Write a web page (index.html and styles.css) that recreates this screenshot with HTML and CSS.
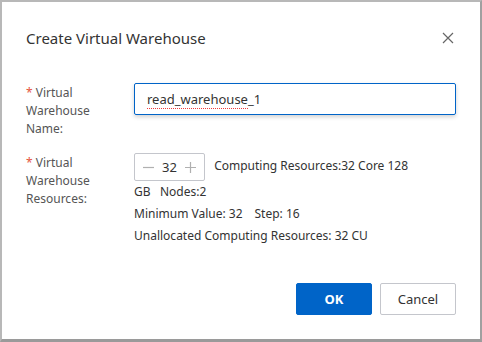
FILE: index.html
```html
<!DOCTYPE html>
<html lang="en">
<head>
    <meta charset="UTF-8">
    <meta name="viewport" content="width=device-width, initial-scale=1.0">
    <title>Create Virtual Warehouse</title>
    <link rel="stylesheet" href="styles.css">
</head>
<body>
    <div class="dialog">
        <div class="dialog-header">
            <div class="dialog-title">Create Virtual Warehouse</div>
            <button class="close-btn" type="button" aria-label="Close">
                <svg width="12" height="12" viewBox="0 0 12 12">
                    <path d="M1 1 L11 11 M11 1 L1 11" stroke="#666" stroke-width="1.2" fill="none"/>
                </svg>
            </button>
        </div>

        <div class="dialog-body">
            <div class="form-row">
                <label class="form-label"><span class="required">*</span> Virtual Warehouse Name:</label>
                <div class="form-control">
                    <div class="text-input"><span class="misspelled">read_warehouse</span>_1</div>
                </div>
            </div>

            <div class="form-row">
                <label class="form-label"><span class="required">*</span> Virtual Warehouse Resources:</label>
                <div class="form-control">
                    <div class="resource-line">
                        <span class="number-picker">
                            <svg class="step-btn" width="11" height="11" viewBox="0 0 11 11">
                                <path d="M0 5.5 H11" stroke="#b0b0b0" stroke-width="1.2"/>
                            </svg>
                            <span class="number-value">32</span>
                            <svg class="step-btn" width="11" height="11" viewBox="0 0 11 11">
                                <path d="M0 5.5 H11 M5.5 0 V11" stroke="#b0b0b0" stroke-width="1.2"/>
                            </svg>
                        </span>
                        <span class="resource-info">Computing Resources:32 Core 128 GB&nbsp;&nbsp; Nodes:2</span>
                    </div>
                    <div class="hint">Minimum Value: 32<span class="hint-gap"></span>Step: 16</div>
                    <div class="hint">Unallocated Computing Resources: 32 CU</div>
                </div>
            </div>
        </div>

        <div class="dialog-footer">
            <button class="btn btn-primary" type="button">OK</button>
            <button class="btn btn-default" type="button">Cancel</button>
        </div>
    </div>
</body>
</html>
```

FILE: styles.css
```css
html, body {
    margin: 0;
    padding: 0;
    height: 100%;
}
body {
    font-family: "Noto Sans", "Open Sans", sans-serif;
    color: #333;
    background: #fff;
}
.dialog {
    box-sizing: border-box;
    width: 482px;
    height: 342px;
    display: flex;
    flex-direction: column;
    background: #fff;
    border-top: 2px solid #b8b8b8;
    border-left: 2px solid #b8b8b8;
    border-right: 2px solid #a0a0a0;
    border-bottom: 3px solid #9a9a9a;
}
.dialog-header {
    display: flex;
    justify-content: space-between;
    align-items: center;
    padding: 24px 24px 0 24px;
    height: 24px;
}
.dialog-title {
    font-size: 15px;
    line-height: 24px;
    color: #333;
}
.close-btn {
    border: none;
    background: none;
    padding: 0;
    margin-right: 2px;
    width: 12px;
    height: 12px;
    display: flex;
    cursor: pointer;
}
.dialog-body {
    padding: 33px 24px 0 24px;
}
.form-row {
    display: flex;
    margin-bottom: 15px;
}
.form-label {
    width: 92px;
    flex-shrink: 0;
    margin-right: 16px;
    font-size: 12px;
    line-height: 18px;
    padding-top: 1px;
    color: #555;
}
.required {
    color: #e5533d;
}
.form-control {
    flex: 1;
    font-size: 12px;
    color: #333;
}
.text-input {
    box-sizing: border-box;
    height: 32px;
    border: 1px solid #0064c8;
    border-radius: 2px;
    padding: 0 12px;
    font-size: 13px;
    line-height: 30px;
    color: #333;
    box-shadow: 0 2px 4px rgba(0, 0, 0, 0.18);
}
.misspelled {
    border-bottom: 1px dotted #f03c3c;
}
.resource-line {
    max-width: 282px;
    line-height: 22px;
}
.number-picker {
    box-sizing: border-box;
    display: inline-flex;
    align-items: center;
    justify-content: space-between;
    width: 71px;
    height: 28px;
    border: 1px solid #c4c6cc;
    border-radius: 2px;
    padding: 0 8px 0 8px;
    vertical-align: middle;
    margin-right: 6px;
}
.step-btn {
    display: block;
}
.number-value {
    font-size: 13px;
    line-height: 18px;
    color: #333;
}
.hint {
    line-height: 22px;
}
.hint-gap {
    display: inline-block;
    width: 12px;
}
.dialog-footer {
    margin-top: auto;
    display: flex;
    justify-content: flex-end;
    gap: 8px;
    padding: 0 24px 24px 24px;
}
.btn {
    box-sizing: border-box;
    height: 32px;
    min-width: 76px;
    padding: 0 16px;
    border-radius: 2px;
    font-family: inherit;
    font-size: 13px;
    cursor: pointer;
}
.btn-primary {
    background: #0064c8;
    border: 1px solid #0064c8;
    color: #fff;
    font-weight: bold;
}
.btn-default {
    background: #fff;
    border: 1px solid #c4c6cc;
    color: #333;
}
```
